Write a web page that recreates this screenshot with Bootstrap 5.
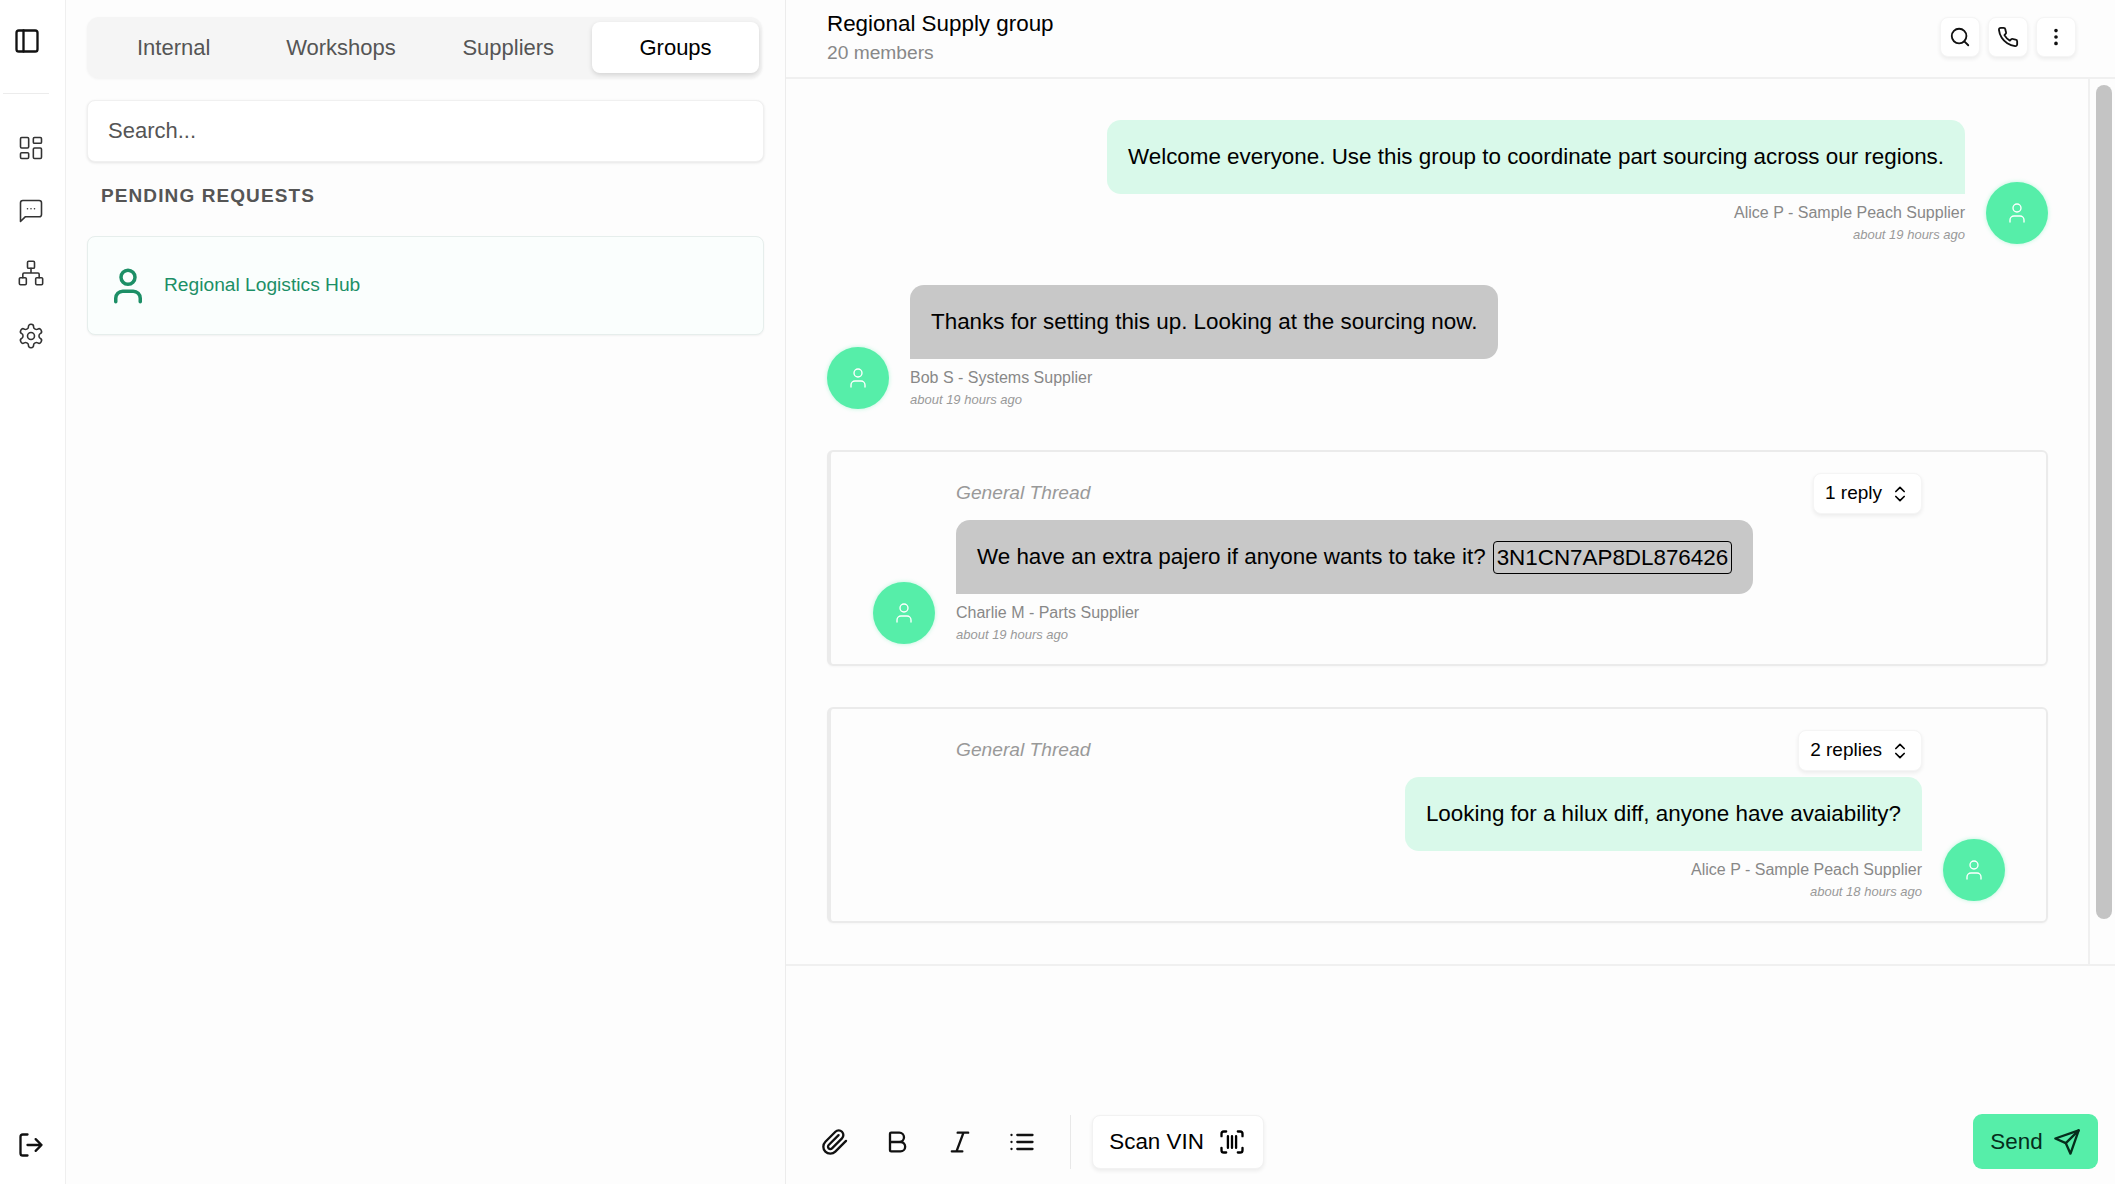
<!DOCTYPE html>
<html lang="en">
<head>
  <meta charset="UTF-8" />
  <meta name="viewport" content="width=device-width, initial-scale=1.0" />
  <title>Regional Supply group</title>
  <link rel="stylesheet" href="https://cdn.jsdelivr.net/npm/bootstrap@5.3.0/dist/css/bootstrap.min.css">
  <style>
    html, body { height: 100%; }
    body {
      background: #fdfdfd;
      color: #000;
      font-family: "Liberation Sans", Arial, sans-serif;
      overflow: hidden;
    }
    .ico { fill: none; stroke: currentColor; stroke-linecap: round; stroke-linejoin: round; stroke-width: 2; flex: none; }
    .ico-thin { stroke-width: 1.35; }

    /* left rail */
    .rail { width: 66px; background: #fff; border-right: 1px solid #efefef; padding-top: 27px; padding-bottom: 25px; }
    .rail-sep { width: 46px; height: 1px; background: #ececec; margin: 38px 0 40px 3px; }
    .rail-link { color: #333; margin-left: 17px; margin-bottom: 34.5px; display: block; height: 28px; }
    .rail-toggle { color: #111; margin-left: 13px; }
    .rail-out { color: #111; margin-left: 17px; }

    /* contact list */
    .side { width: 720px; border-right: 1px solid #ececec; padding: 17px 20px 0 21px; }
    .tabs-box { background: #f5f5f5; border-radius: 12px; padding: 5px 3px; width: 675px; box-shadow: 0 1px 3px rgba(0,0,0,.05); }
    .tab-item { width: 167.3px; height: 51px; font-size: 22px; color: #555; border-radius: 8px; flex: none; }
    .tab-item.on { color: #000; background: #fff; box-shadow: 0 2px 5px rgba(0,0,0,.14); }
    .side-search { height: 62px; margin-top: 22px; width: 677px; font-size: 22px; padding-left: 20px; border: 1px solid #f0f0f0; border-radius: 8px; box-shadow: 0 1px 3px rgba(0,0,0,.1); background: #fff; }
    .side-search::placeholder { color: #555; }
    .side-head { font-size: 19px; font-weight: 700; letter-spacing: 1.1px; color: #555; margin: 23px 0 0 14px; line-height: 22px; }
    .req-card { width: 677px; height: 99px; margin-top: 29px; padding-left: 19px; gap: 15px; border: 1px solid #e6eeec; border-radius: 8px; background: #fafefd; color: #1c8f66; font-size: 19.2px; box-shadow: 0 1px 2px rgba(0,0,0,.05); }

    /* chat column */
    .chat { min-width: 0; }
    .chat-top { height: 79px; border-bottom: 2px solid #f0f0f0; padding: 0 39px 0 41px; }
    .chat-name { font-size: 22.4px; line-height: 26px; margin-top: 11px; }
    .chat-sub { font-size: 19.2px; line-height: 24px; color: #888; margin-top: 4px; }
    .top-btn { width: 40px; height: 40px; border-radius: 8px; background: #fff; border: 1px solid #f5f5f5; box-shadow: 0 2px 4px rgba(0,0,0,.07); margin-top: 17px; color: #111; }

    .chat-body { height: 885px; }
    .msgs { padding: 41px 40px 0 41px; gap: 41px; }
    .scroll-track { width: 27px; border-left: 2px solid #f0f0f0; padding: 6px 3px 0 6px; }
    .scroll-thumb { height: 834px; background: #c4c4c4; border-radius: 8px; }

    .msg-row { gap: 21px; }
    .avatar-dot { width: 62px; height: 62px; border-radius: 50%; background: #56eea9; color: #fff; box-shadow: 0 0 4px rgba(86,238,169,.4); }
    .bubble { height: 74px; font-size: 22.4px; padding: 0 21px; border-radius: 14px; white-space: nowrap; }
    .bubble-me { background: #d9f9ea; border-bottom-right-radius: 0; }
    .bubble-them { background: #c8c8c8; border-bottom-left-radius: 0; }
    .who { font-size: 16px; line-height: 20px; color: #888; margin-top: 9px; }
    .when { font-size: 13px; line-height: 18px; color: #999; font-style: italic; margin-top: 3px; }
    .vin-chip { border: 1px solid #000; border-radius: 4px; padding: 3px 3px; margin-left: 7px; line-height: 25px; }

    .thread-box { height: 216px; border: 2px solid #ebebeb; border-left-width: 4px; border-radius: 6px; padding: 21px 41px 0 42px; box-shadow: 0 1px 2px rgba(0,0,0,.03); }
    .thread-top { height: 41px; margin-bottom: 6px; padding: 0 83px; }
    .thread-name { font-size: 19.2px; font-style: italic; color: #999; }
    .reply-btn { height: 41px; padding: 0 11px; font-size: 19px; background: #fff; border: 1px solid #f5f5f5; border-radius: 8px; box-shadow: 0 2px 4px rgba(0,0,0,.07); gap: 8px; color: #000; }

    /* composer */
    .composer { height: 220px; border-top: 2px solid #f0f0f0; padding: 0 17px 15px 35px; }
    .tool-ico { color: #111; margin-right: 34.4px; }
    .tool-sep { width: 1px; height: 54px; background: #e8e8e8; margin-left: -1px; margin-right: 21px; }
    .scan-btn { height: 54px; width: 172px; font-size: 22.4px; background: #fff; border: 1px solid #f2f2f2; border-radius: 8px; box-shadow: 0 2px 4px rgba(0,0,0,.07); gap: 14px; color: #000; }
    .send-btn { height: 55px; width: 125px; font-size: 22.4px; background: #56eea9; border: 0; border-radius: 9px; gap: 10px; color: #052e1c; }
    .send-btn:hover { background: #56eea9; }
    .scan-btn:hover, .reply-btn:hover { background: #fff; }
  </style>
</head>
<body>
  <svg width="0" height="0" class="position-absolute">
    <defs>
      <symbol id="i-panel" viewBox="0 0 24 24"><rect x="3" y="3" width="18" height="18" rx="2"/><path d="M9 3v18"/></symbol>
      <symbol id="i-dash" viewBox="0 0 24 24"><rect x="3" y="3" width="7" height="9" rx="1"/><rect x="14" y="3" width="7" height="5" rx="1"/><rect x="14" y="12" width="7" height="9" rx="1"/><rect x="3" y="16" width="7" height="5" rx="1"/></symbol>
      <symbol id="i-chat" viewBox="0 0 24 24"><path d="M21 15a2 2 0 0 1-2 2H7l-4 4V5a2 2 0 0 1 2-2h14a2 2 0 0 1 2 2z"/><path d="M9 10h.01M12 10h.01M15 10h.01"/></symbol>
      <symbol id="i-net" viewBox="0 0 24 24"><rect x="16" y="16" width="6" height="6" rx="1"/><rect x="2" y="16" width="6" height="6" rx="1"/><rect x="9" y="2" width="6" height="6" rx="1"/><path d="M5 16v-3a1 1 0 0 1 1-1h12a1 1 0 0 1 1 1v3M12 12V8"/></symbol>
      <symbol id="i-gear" viewBox="0 0 24 24"><path d="M12.22 2h-.44a2 2 0 0 0-2 2v.18a2 2 0 0 1-1 1.73l-.43.25a2 2 0 0 1-2 0l-.15-.08a2 2 0 0 0-2.73.73l-.22.38a2 2 0 0 0 .73 2.73l.15.1a2 2 0 0 1 1 1.72v.51a2 2 0 0 1-1 1.74l-.15.09a2 2 0 0 0-.73 2.73l.22.38a2 2 0 0 0 2.73.73l.15-.08a2 2 0 0 1 2 0l.43.25a2 2 0 0 1 1 1.73V20a2 2 0 0 0 2 2h.44a2 2 0 0 0 2-2v-.18a2 2 0 0 1 1-1.73l.43-.25a2 2 0 0 1 2 0l.15.08a2 2 0 0 0 2.73-.73l.22-.39a2 2 0 0 0-.73-2.73l-.15-.08a2 2 0 0 1-1-1.74v-.5a2 2 0 0 1 1-1.74l.15-.09a2 2 0 0 0 .73-2.73l-.22-.38a2 2 0 0 0-2.73-.73l-.15.08a2 2 0 0 1-2 0l-.43-.25a2 2 0 0 1-1-1.73V4a2 2 0 0 0-2-2z"/><circle cx="12" cy="12" r="3"/></symbol>
      <symbol id="i-out" viewBox="0 0 24 24"><path d="M9 21H5a2 2 0 0 1-2-2V5a2 2 0 0 1 2-2h4M16 17l5-5-5-5M21 12H9"/></symbol>
      <symbol id="i-user" viewBox="0 0 24 24"><circle cx="12" cy="7" r="4"/><path d="M19 21v-2a4 4 0 0 0-4-4H9a4 4 0 0 0-4 4v2"/></symbol>
      <symbol id="i-search" viewBox="0 0 24 24"><circle cx="11" cy="11" r="8"/><path d="m21 21-4.3-4.3"/></symbol>
      <symbol id="i-phone" viewBox="0 0 24 24"><path d="M22 16.92v3a2 2 0 0 1-2.18 2 19.79 19.79 0 0 1-8.63-3.07 19.5 19.5 0 0 1-6-6 19.79 19.79 0 0 1-3.07-8.67A2 2 0 0 1 4.11 2h3a2 2 0 0 1 2 1.72 12.84 12.84 0 0 0 .7 2.81 2 2 0 0 1-.45 2.11L8.09 9.91a16 16 0 0 0 6 6l1.27-1.27a2 2 0 0 1 2.11-.45 12.84 12.84 0 0 0 2.81.7A2 2 0 0 1 22 16.92z"/></symbol>
      <symbol id="i-dots" viewBox="0 0 24 24"><circle cx="12" cy="5" r="1"/><circle cx="12" cy="12" r="1"/><circle cx="12" cy="19" r="1"/></symbol>
      <symbol id="i-updown" viewBox="0 0 24 24"><path d="m7 15 5 5 5-5M7 9l5-5 5 5"/></symbol>
      <symbol id="i-clip" viewBox="0 0 24 24"><path d="m21.44 11.05-9.19 9.19a6 6 0 0 1-8.49-8.49l8.57-8.57A4 4 0 1 1 18 8.84l-8.59 8.57a2 2 0 0 1-2.83-2.83l8.49-8.48"/></symbol>
      <symbol id="i-bold" viewBox="0 0 24 24"><path d="M6 12h9a4 4 0 0 1 0 8H7a1 1 0 0 1-1-1V5a1 1 0 0 1 1-1h7a4 4 0 0 1 0 8"/></symbol>
      <symbol id="i-italic" viewBox="0 0 24 24"><path d="M19 4h-9M14 20H5M15 4 9 20"/></symbol>
      <symbol id="i-list" viewBox="0 0 24 24"><path d="M3 12h.01M3 18h.01M3 6h.01M8 12h13M8 18h13M8 6h13"/></symbol>
      <symbol id="i-scan" viewBox="0 0 24 24"><path d="M3 7V5a2 2 0 0 1 2-2h2M17 3h2a2 2 0 0 1 2 2v2M21 17v2a2 2 0 0 1-2 2h-2M7 21H5a2 2 0 0 1-2-2v-2M8.500 7v10M12 7v10M15.500 7v10"/></symbol>
      <symbol id="i-send" viewBox="0 0 24 24"><path d="m22 2-7 20-4-9-9-4Z"/><path d="M22 2 11 13"/></symbol>
    </defs>
  </svg>

  <div class="d-flex vh-100">
    <!-- rail -->
    <div class="rail d-flex flex-column flex-shrink-0">
      <svg class="ico rail-toggle" width="28" height="28"><use href="#i-panel"/></svg>
      <div class="rail-sep"></div>
      <a class="rail-link"><svg class="ico ico-thin" width="28" height="28"><use href="#i-dash"/></svg></a>
      <a class="rail-link"><svg class="ico ico-thin" width="28" height="28"><use href="#i-chat"/></svg></a>
      <a class="rail-link"><svg class="ico ico-thin" width="28" height="28"><use href="#i-net"/></svg></a>
      <a class="rail-link"><svg class="ico ico-thin" width="28" height="28"><use href="#i-gear"/></svg></a>
      <svg class="ico rail-out mt-auto" width="28" height="28"><use href="#i-out"/></svg>
    </div>

    <!-- list -->
    <div class="side flex-shrink-0">
      <div class="tabs-box d-flex">
        <div class="tab-item d-flex align-items-center justify-content-center">Internal</div>
        <div class="tab-item d-flex align-items-center justify-content-center">Workshops</div>
        <div class="tab-item d-flex align-items-center justify-content-center">Suppliers</div>
        <div class="tab-item on d-flex align-items-center justify-content-center">Groups</div>
      </div>
      <input class="form-control side-search" placeholder="Search...">
      <div class="side-head">PENDING REQUESTS</div>
      <div class="req-card d-flex align-items-center">
        <svg class="ico" width="42" height="42"><use href="#i-user"/></svg>
        <span>Regional Logistics Hub</span>
      </div>
    </div>

    <!-- chat -->
    <div class="chat flex-grow-1 d-flex flex-column">
      <div class="chat-top d-flex justify-content-between flex-shrink-0">
        <div>
          <div class="chat-name">Regional Supply group</div>
          <div class="chat-sub">20 members</div>
        </div>
        <div class="d-flex gap-2">
          <div class="top-btn d-flex align-items-center justify-content-center"><svg class="ico" width="22" height="22"><use href="#i-search"/></svg></div>
          <div class="top-btn d-flex align-items-center justify-content-center"><svg class="ico" width="22" height="22"><use href="#i-phone"/></svg></div>
          <div class="top-btn d-flex align-items-center justify-content-center"><svg class="ico" width="22" height="22"><use href="#i-dots"/></svg></div>
        </div>
      </div>

      <div class="chat-body d-flex flex-shrink-0">
        <div class="msgs flex-grow-1 d-flex flex-column">
          <div class="msg-row d-flex justify-content-end align-items-end">
            <div class="d-flex flex-column align-items-end">
              <div class="bubble bubble-me d-flex align-items-center">Welcome everyone. Use this group to coordinate part sourcing across our regions.</div>
              <div class="who">Alice P - Sample Peach Supplier</div>
              <div class="when">about 19 hours ago</div>
            </div>
            <div class="avatar-dot d-flex align-items-center justify-content-center"><svg class="ico ico-thin" width="24" height="24"><use href="#i-user"/></svg></div>
          </div>

          <div class="msg-row d-flex align-items-end">
            <div class="avatar-dot d-flex align-items-center justify-content-center"><svg class="ico ico-thin" width="24" height="24"><use href="#i-user"/></svg></div>
            <div>
              <div class="bubble bubble-them d-flex align-items-center">Thanks for setting this up. Looking at the sourcing now.</div>
              <div class="who">Bob S - Systems Supplier</div>
              <div class="when">about 19 hours ago</div>
            </div>
          </div>

          <div class="thread-box">
            <div class="thread-top d-flex justify-content-between align-items-center">
              <span class="thread-name">General Thread</span>
              <button class="btn reply-btn d-flex align-items-center">1 reply <svg class="ico" width="20" height="20"><use href="#i-updown"/></svg></button>
            </div>
            <div class="msg-row d-flex align-items-end">
              <div class="avatar-dot d-flex align-items-center justify-content-center"><svg class="ico ico-thin" width="24" height="24"><use href="#i-user"/></svg></div>
              <div>
                <div class="bubble bubble-them d-flex align-items-center">We have an extra pajero if anyone wants to take it? <span class="vin-chip">3N1CN7AP8DL876426</span></div>
                <div class="who">Charlie M - Parts Supplier</div>
                <div class="when">about 19 hours ago</div>
              </div>
            </div>
          </div>

          <div class="thread-box">
            <div class="thread-top d-flex justify-content-between align-items-center">
              <span class="thread-name">General Thread</span>
              <button class="btn reply-btn d-flex align-items-center">2 replies <svg class="ico" width="20" height="20"><use href="#i-updown"/></svg></button>
            </div>
            <div class="msg-row d-flex justify-content-end align-items-end">
              <div class="d-flex flex-column align-items-end">
                <div class="bubble bubble-me d-flex align-items-center">Looking for a hilux diff, anyone have avaiability?</div>
                <div class="who">Alice P - Sample Peach Supplier</div>
                <div class="when">about 18 hours ago</div>
              </div>
              <div class="avatar-dot d-flex align-items-center justify-content-center"><svg class="ico ico-thin" width="24" height="24"><use href="#i-user"/></svg></div>
            </div>
          </div>
        </div>
        <div class="scroll-track flex-shrink-0"><div class="scroll-thumb"></div></div>
      </div>

      <div class="composer flex-grow-1 d-flex align-items-end justify-content-between">
        <div class="d-flex align-items-center">
          <svg class="ico tool-ico" width="28" height="28"><use href="#i-clip"/></svg>
          <svg class="ico tool-ico" width="28" height="28"><use href="#i-bold"/></svg>
          <svg class="ico tool-ico" width="28" height="28"><use href="#i-italic"/></svg>
          <svg class="ico tool-ico" width="28" height="28"><use href="#i-list"/></svg>
          <div class="tool-sep"></div>
          <button class="btn scan-btn d-flex align-items-center justify-content-center">Scan VIN <svg class="ico" width="28" height="28"><use href="#i-scan"/></svg></button>
        </div>
        <button class="btn send-btn d-flex align-items-center justify-content-center">Send <svg class="ico" width="28" height="28"><use href="#i-send"/></svg></button>
      </div>
    </div>
  </div>

  <script src="https://cdn.jsdelivr.net/npm/bootstrap@5.3.0/dist/js/bootstrap.bundle.min.js"></script>
</body>
</html>
